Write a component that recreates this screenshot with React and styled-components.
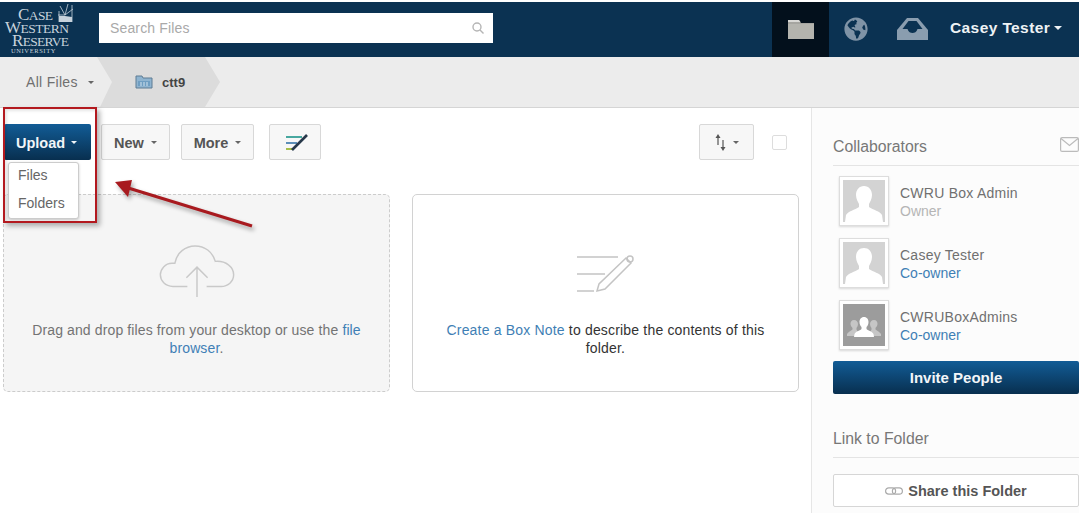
import React from 'react'
import styled, { createGlobalStyle } from 'styled-components'
import { FaGlobeAmericas } from 'react-icons/fa'

const GlobalStyle = createGlobalStyle`
  html, body {
    margin: 0;
    padding: 0;
    background: #fff;
    overflow: hidden;
  }
  * { box-sizing: border-box; }
  body {
    font-family: "Liberation Sans", Arial, sans-serif;
    font-size: 14px;
    color: #666;
  }
`

const Page = styled.div`
  position: relative;
  width: 1079px;
  height: 513px;
  padding-top: 2px;
  overflow: hidden;
`

/* header */
const Header = styled.header`
  height: 55px;
  background: #0b3252;
  display: flex;
  align-items: stretch;
`

const Logo = styled.div`
  position: relative;
  width: 99px;
  padding-top: 6px;
  color: #c7d2dc;
  font-family: "Liberation Serif", serif;
  white-space: nowrap;
`

const LogoLine = styled.div`
  padding-left: ${p => p.$left}px;
  height: 13px;
  line-height: 13px;
  font-size: 13.500px;
  letter-spacing: ${p => p.$ls || 0}px;
  &::first-letter { font-size: 17px; }
`

const LogoFoot = styled.div`
  padding-left: 11px;
  height: 8px;
  line-height: 8px;
  font-size: 6.500px;
  letter-spacing: 0.6px;
`

const LogoSun = styled.svg`
  position: absolute;
  left: 57px;
  top: 1px;
`

const SearchBox = styled.div`
  width: 394px;
  height: 30px;
  margin-top: 11px;
  background: #fff;
  display: flex;
  align-items: center;
  justify-content: space-between;
  padding: 0 8px 0 11px;
  color: #a9a9a9;
  font-size: 14px;
  letter-spacing: 0.15px;
`

const HeaderRight = styled.div`
  margin-left: auto;
  display: flex;
  align-items: stretch;
`

const NavTab = styled.div`
  width: ${p => p.$w}px;
  display: flex;
  align-items: center;
  justify-content: center;
  padding-bottom: 2px;
  background: ${p => (p.$active ? '#03101c' : 'transparent')};
`

const UserName = styled.div`
  width: 138px;
  padding: 0 0 3px 9px;
  display: flex;
  align-items: center;
  gap: 4px;
  color: #eef2f5;
  font-weight: bold;
  font-size: 15.500px;
  letter-spacing: 0.4px;
`

const Caret = styled.i`
  display: inline-block;
  width: 0;
  height: 0;
  border-left: ${p => p.$size || 3}px solid transparent;
  border-right: ${p => p.$size || 3}px solid transparent;
  border-top: ${p => p.$size || 3}px solid ${p => p.$color || '#666'};
`

/* breadcrumb */
const Crumbs = styled.nav`
  height: 51px;
  background: #ececec;
  border-bottom: 1px solid #d5d5d5;
  display: flex;
  align-items: stretch;
`

const RootCrumb = styled.div`
  width: 97px;
  padding-left: 26px;
  display: flex;
  align-items: center;
  gap: 10px;
  color: #707070;
  letter-spacing: 0.3px;
`

const ActiveCrumb = styled.div`
  width: 124px;
  padding-left: 38px;
  display: flex;
  align-items: center;
  gap: 9px;
  background: #dcdcdc;
  color: #444;
  font-weight: bold;
  font-size: 13px;
  clip-path: polygon(0 0, 108px 0, 123px 50%, 108px 100%, 3px 100%, 15px 50%);
`

/* body */
const Main = styled.div`
  display: flex;
  height: 405px;
`

const Content = styled.main`
  width: 811px;
  padding: 16px 12px 0 3px;
`

const Toolbar = styled.div`
  height: 36px;
  display: flex;
  align-items: stretch;
  position: relative;
`

const Button = styled.div`
  width: ${p => p.$w}px;
  margin-left: ${p => p.$ml || 0}px;
  padding: 1px 0 0 ${p => p.$pl || 0}px;
  display: flex;
  align-items: center;
  justify-content: center;
  gap: 7px;
  background: #f7f7f7;
  border: 1px solid #d8d8d8;
  border-radius: 2px;
  color: #555;
  font-weight: bold;
  font-size: 14.500px;
`

const PrimaryButton = styled.div`
  width: 87px;
  margin-left: 1px;
  padding: 1px 2px 0 0;
  display: flex;
  align-items: center;
  justify-content: center;
  gap: 6px;
  background: linear-gradient(#125c96, #082f4f);
  border-radius: 2px;
  color: #f2f5f8;
  font-weight: bold;
  font-size: 14.500px;
`

const CheckBox = styled.div`
  width: 15px;
  height: 15px;
  margin: 11px 0 0 18px;
  background: #fff;
  border: 1px solid #ddd;
  border-radius: 2px;
`

const Menu = styled.div`
  position: absolute;
  left: 5px;
  top: 38px;
  width: 71px;
  height: 57px;
  background: #fff;
  border: 1px solid #ccc;
  border-radius: 3px;
  box-shadow: 0 1px 3px rgba(0,0,0,.2);
  z-index: 2;
`

const MenuItem = styled.div`
  height: 28px;
  line-height: 24px;
  padding-left: 9px;
  color: #666;
`

const Cards = styled.div`
  margin-top: 34px;
  display: flex;
  gap: 22px;
`

const Card = styled.div`
  flex: 1;
  height: 198px;
  border-radius: 5px;
  border: 1px ${p => (p.$dashed ? 'dashed #ccc' : 'solid #d2d2d2')};
  background: ${p => (p.$dashed ? '#f5f5f5' : '#fff')};
  color: ${p => (p.$dashed ? '#737373' : '#333')};
  display: flex;
  flex-direction: column;
  align-items: center;
  padding: ${p => p.$pt}px 20px 0;
  text-align: center;
  line-height: 18px;
  font-size: 14px;
  letter-spacing: ${p => (p.$dashed ? 0.12 : 0.18)}px;
  svg { display: block; }
`

const CardText = styled.div`
  margin-top: ${p => p.$mt}px;
`

const Anchor = styled.span`
  color: #3f7fb5;
`

/* sidebar */
const Sidebar = styled.aside`
  width: 268px;
  padding: 29px 0 0 21px;
  background: #fcfcfc;
  border-left: 1px solid #e6e6e6;
`

const SideTitle = styled.div`
  height: ${p => p.$h}px;
  display: flex;
  justify-content: space-between;
  align-items: flex-start;
  border-bottom: 1px solid #e4e4e4;
  color: #777;
  font-size: 15.800px;
  line-height: 20px;
  margin-top: ${p => p.$mt || 0}px;
`

const Collaborators = styled.div`
  padding: 10px 0 0 6px;
  display: flex;
  flex-direction: column;
  gap: 11px;
`

const Person = styled.div`
  display: flex;
  align-items: flex-start;
  gap: 11px;
  height: 51px;
`

const Avatar = styled.div`
  width: 50px;
  height: 50px;
  padding: 3px;
  background: #fff;
  border: 1px solid #ddd;
  box-shadow: 0 1px 2px rgba(0,0,0,.15);
  svg { display: block; }
`

const PersonText = styled.div`
  padding-top: 8px;
  line-height: 18px;
  font-size: 14px;
  letter-spacing: 0.25px;
  color: #707070;
`

const Role = styled.div`
  letter-spacing: 0;
  color: ${p => (p.$link ? '#3f7fb5' : '#b5b5b5')};
`

const InviteButton = styled.div`
  margin-top: 10px;
  height: 33px;
  display: flex;
  align-items: center;
  justify-content: center;
  background: linear-gradient(#125c96, #082f4f);
  border-radius: 2px;
  color: #f2f5f8;
  font-weight: bold;
  font-size: 15px;
`

const ShareButton = styled.div`
  margin-top: 16px;
  height: 33px;
  display: flex;
  align-items: center;
  justify-content: center;
  gap: 5px;
  background: #fff;
  border: 1px solid #d6d6d6;
  border-radius: 2px;
  color: #555;
  font-weight: bold;
  font-size: 14.500px;
`

/* annotation on top of the screenshot */
const RedBox = styled.div`
  position: absolute;
  left: 3px;
  top: 107px;
  width: 94px;
  height: 116px;
  border: 2px solid #b3191f;
  box-shadow: 3px 3px 5px rgba(0,0,0,.3), inset 2px 2px 3px rgba(0,0,0,.1);
  z-index: 3;
`

const ArrowMark = styled.svg`
  position: absolute;
  left: 105px;
  top: 170px;
  z-index: 3;
  overflow: visible;
  filter: drop-shadow(2px 3px 2px rgba(0,0,0,.35));
`

const SearchIcon = () => (
  <svg width="14" height="14" viewBox="0 0 14 14" fill="none" stroke="#b5b5b5" strokeWidth="1.4">
    <circle cx="6" cy="6" r="4" />
    <path d="M9 9l3.5 3.5" />
  </svg>
)

const SunGlyph = () => (
  <LogoSun width="17" height="20" viewBox="0 0 17 20" fill="none" stroke="#c7d2dc" strokeWidth="0.800">
    <path d="M2 19V8M15 19V2M8 12L3 3M8 12l3-11M8 12l8-6M8 12H1" />
    <path d="M2 13h6l7 1v5H2z" fill="#c7d2dc" stroke="none" />
  </LogoSun>
)

const FolderGlyph = () => (
  <svg width="26" height="20" viewBox="0 0 26 20">
    <path d="M0 1h11l2 3h13v16H0z" fill="#a5a5a0" />
    <path d="M0 1h11l1.500 2H0z" fill="#d8d8d5" />
    <rect y="5" width="26" height="15" fill="#b4b4ae" />
  </svg>
)

const InboxGlyph = () => (
  <svg width="31" height="22" viewBox="0 0 31 22">
    <path d="M10 0h11l10 12v10H0V12z" fill="#8a9daf" />
    <path d="M11.500 3h8l6 8h-5c-1 3-3 4-5 4s-4-1-5-4H5.500z" fill="#0b3252" />
  </svg>
)

const SmallFolder = () => (
  <svg width="18" height="14" viewBox="0 0 18 14">
    <path d="M1 1h6l1 2h9v10H1z" fill="#8fb4d0" stroke="#5f7d94" />
    <rect x="3" y="6" width="12" height="5" fill="#6f9ec2" />
    <path d="M6 7v4M9 7v4M12 7v4" stroke="#d4e3ee" />
  </svg>
)

const NoteGlyph = () => (
  <svg width="22" height="17" viewBox="0 0 22 17" fill="none" strokeWidth="2">
    <path d="M0 3h16" stroke="#48a8a0" />
    <path d="M0 9h11" stroke="#5d8fb8" />
    <path d="M0 15h7" stroke="#a6bf4a" />
    <path d="M6 16L21 1" stroke="#27384a" strokeWidth="2.600" />
  </svg>
)

const SortGlyph = () => (
  <svg width="11" height="17" viewBox="0 0 11 17">
    <path d="M3 11V3" stroke="#555" strokeWidth="1.200" />
    <path d="M3 0L.5 4h5z" fill="#555" />
    <path d="M8 6v8" stroke="#555" strokeWidth="1.200" />
    <path d="M8 17l-2.500-4h5z" fill="#555" />
  </svg>
)

const CloudGlyph = () => (
  <svg width="78" height="54" viewBox="0 0 80 56" fill="none" stroke="#c9c9c9" strokeWidth="1.500">
    <path d="M30 44H15C7 44 2 38 2 32s5-12 12-12h3C19 9 28 2 38 2c10 0 18 6 21 16 11-1 19 6 19 14 0 7-6 12-13 12H50" />
    <path d="M40 55V24M29 35l11-11 11 11" />
  </svg>
)

const PencilGlyph = () => (
  <svg width="60" height="40" viewBox="0 0 60 40" fill="none" stroke="#c4c4c4" strokeWidth="1.500">
    <path d="M1 3h41M1 20h28M1 37h17" />
    <path d="M21 37l2-7L50 4l5 5-26 26z" />
    <circle cx="54" cy="5" r="3" />
  </svg>
)

const MailGlyph = () => (
  <svg width="19" height="15" viewBox="0 0 19 15" fill="none" stroke="#bbb" strokeWidth="1.200">
    <rect x="0.600" y="0.600" width="17.800" height="13.800" rx="1.500" />
    <path d="M1 1.500l8.500 7 8.500-7" />
  </svg>
)

const LinkGlyph = () => (
  <svg width="18" height="8" viewBox="0 0 18 8" fill="none" stroke="#aaa" strokeWidth="1.200">
    <rect x="0.600" y="0.800" width="10" height="6.400" rx="3.200" />
    <rect x="7.400" y="0.800" width="10" height="6.400" rx="3.200" />
  </svg>
)

const PersonGlyph = () => (
  <svg width="42" height="42" viewBox="0 0 42 42">
    <rect width="42" height="42" fill="#d3d3d3" />
    <path d="M21 6c5 0 8 4 8 9 0 4-2 7-3 9v3c4 3 11 4 13 8l1 7H2l1-7c2-4 9-5 13-8v-3c-1-2-3-5-3-9 0-5 3-9 8-9z" fill="#fff" />
  </svg>
)

const GroupGlyph = () => (
  <svg width="42" height="42" viewBox="0 0 42 42">
    <rect width="42" height="42" fill="#9c9c9c" />
    <g fill="#c6c6c6">
      <path d="M11 16c2.500 0 4 2 4 4 0 2-1 3-1.500 4v1.500L17 32H4v-2c1-2 4-3 5.500-4.500V24C9 23 7.500 22 7.500 20c0-2 1-4 3.500-4z" />
      <path d="M31 16c-2.500 0-4 2-4 4 0 2 1 3 1.500 4v1.500L25 32h13v-2c-1-2-4-3-5.500-4.500V24c.5-1 2-2 2-4s-1-4-3.500-4z" />
    </g>
    <path d="M21 13c3 0 4.500 2.500 4.500 5 0 2.500-1 4-2 5v2c2 2 6 2.500 7 5l.5 3H11l.5-3c1-2.500 5-3 7-5v-2c-1-1-2-2.500-2-5s1.500-5 4.500-5z" fill="#fff" />
  </svg>
)

const people = [
  { name: 'CWRU Box Admin', role: 'Owner', glyph: <PersonGlyph /> },
  { name: 'Casey Tester', role: 'Co-owner', link: true, glyph: <PersonGlyph /> },
  { name: 'CWRUBoxAdmins', role: 'Co-owner', link: true, glyph: <GroupGlyph /> },
]

export default function App() {
  return (
    <Page>
      <GlobalStyle />
      <Header>
        <Logo>
          <SunGlyph />
          <LogoLine $left={18} $ls={-0.6}>CASE</LogoLine>
          <LogoLine $left={5} $ls={-0.5}>WESTERN</LogoLine>
          <LogoLine $left={12} $ls={-0.7}>RESERVE</LogoLine>
          <LogoFoot>UNIVERSITY</LogoFoot>
        </Logo>
        <SearchBox>
          Search Files
          <SearchIcon />
        </SearchBox>
        <HeaderRight>
          <NavTab $w={57} $active><FolderGlyph /></NavTab>
          <NavTab $w={54}><FaGlobeAmericas size={24} color="#7f93a6" /></NavTab>
          <NavTab $w={58}><InboxGlyph /></NavTab>
          <UserName>Casey Tester <Caret $size={4} $color="#eef2f5" /></UserName>
        </HeaderRight>
      </Header>

      <Crumbs>
        <RootCrumb>All Files <Caret /></RootCrumb>
        <ActiveCrumb><SmallFolder /> ctt9</ActiveCrumb>
      </Crumbs>

      <Main>
        <Content>
          <Toolbar>
            <PrimaryButton>Upload <Caret $color="#f2f5f8" /></PrimaryButton>
            <Button $w={69} $ml={10}>New <Caret /></Button>
            <Button $w={73} $ml={11}>More <Caret /></Button>
            <Button $w={52} $ml={15} $pl={4}><NoteGlyph /></Button>
            <Button $w={55} $ml={378}><SortGlyph /> <Caret /></Button>
            <CheckBox />
            <Menu>
              <MenuItem>Files</MenuItem>
              <MenuItem>Folders</MenuItem>
            </Menu>
          </Toolbar>
          <Cards>
            <Card $dashed $pt={49}>
              <CloudGlyph />
              <CardText $mt={23}>
                Drag and drop files from your desktop or use the <Anchor>file</Anchor>
                <br />
                <Anchor>browser</Anchor>.
              </CardText>
            </Card>
            <Card $pt={59}>
              <PencilGlyph />
              <CardText $mt={27}>
                <Anchor>Create a Box Note</Anchor> to describe the contents of this
                <br />
                folder.
              </CardText>
            </Card>
          </Cards>
        </Content>

        <Sidebar>
          <SideTitle $h={29}>
            Collaborators
            <MailGlyph />
          </SideTitle>
          <Collaborators>
            {people.map(p => (
              <Person key={p.name}>
                <Avatar>{p.glyph}</Avatar>
                <PersonText>
                  {p.name}
                  <Role $link={p.link}>{p.role}</Role>
                </PersonText>
              </Person>
            ))}
          </Collaborators>
          <InviteButton>Invite People</InviteButton>
          <SideTitle $h={29} $mt={35}>Link to Folder</SideTitle>
          <ShareButton><LinkGlyph /> Share this Folder</ShareButton>
        </Sidebar>
      </Main>

      <RedBox />
      <ArrowMark width="150" height="62" viewBox="0 0 150 62">
        <path d="M147 56L20 17" stroke="#a81a1f" strokeWidth="3" fill="none" />
        <path d="M10 12L27 10 23 27z" fill="#a81a1f" />
      </ArrowMark>
    </Page>
  )
}
